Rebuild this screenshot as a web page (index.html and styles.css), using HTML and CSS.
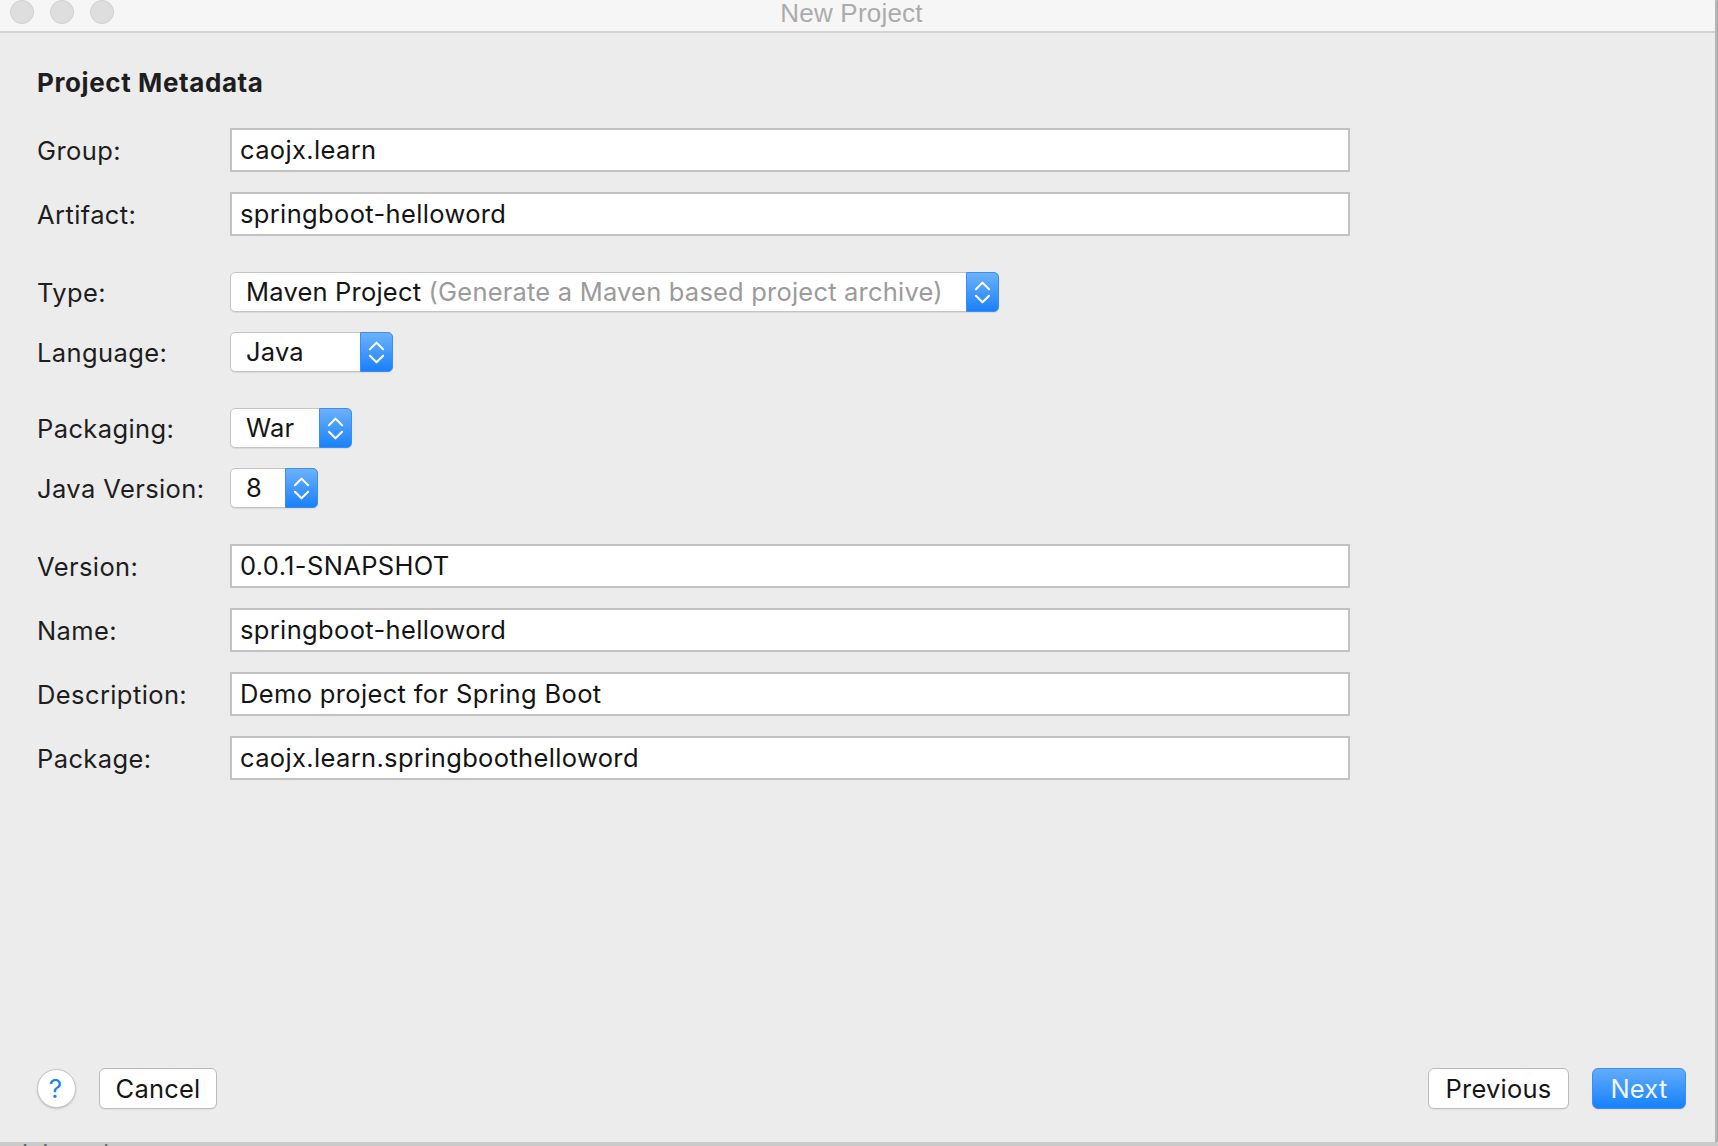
FILE: index.html
```html
<!DOCTYPE html>
<html lang="en">
<head>
<meta charset="utf-8">
<title>New Project</title>
<link rel="stylesheet" href="styles.css">
</head>
<body>
<div class="window">
  <header class="titlebar">
    <div class="lights"><span class="light"></span><span class="light"></span><span class="light"></span></div>
    <div class="title">New Project</div>
    <div></div>
  </header>
  <main class="content">
    <h1 class="heading">Project Metadata</h1>
    <div class="form">
      <div class="group">
        <div class="row"><label class="label">Group:</label><div class="field">caojx.learn</div></div>
        <div class="row"><label class="label">Artifact:</label><div class="field">springboot-helloword</div></div>
      </div>
      <div class="group">
        <div class="row"><label class="label">Type:</label>
          <div class="select w-type"><span class="select-text">Maven Project <span class="hint">(Generate a Maven based project archive)</span></span>
            <span class="stepper"><svg width="33" height="38" viewBox="0 0 33 38"><path d="M9.5 16 L16.5 9 L23.5 16 M9.5 23 L16.5 30 L23.5 23" fill="none" stroke="#fff" stroke-width="2.2" stroke-linecap="round" stroke-linejoin="round"/></svg></span>
          </div>
        </div>
        <div class="row"><label class="label">Language:</label>
          <div class="select w-lang"><span class="select-text">Java</span>
            <span class="stepper"><svg width="33" height="38" viewBox="0 0 33 38"><path d="M9.5 16 L16.5 9 L23.5 16 M9.5 23 L16.5 30 L23.5 23" fill="none" stroke="#fff" stroke-width="2.2" stroke-linecap="round" stroke-linejoin="round"/></svg></span>
          </div>
        </div>
      </div>
      <div class="group">
        <div class="row"><label class="label">Packaging:</label>
          <div class="select w-pack"><span class="select-text">War</span>
            <span class="stepper"><svg width="33" height="38" viewBox="0 0 33 38"><path d="M9.5 16 L16.5 9 L23.5 16 M9.5 23 L16.5 30 L23.5 23" fill="none" stroke="#fff" stroke-width="2.2" stroke-linecap="round" stroke-linejoin="round"/></svg></span>
          </div>
        </div>
        <div class="row"><label class="label">Java Version:</label>
          <div class="select w-ver"><span class="select-text">8</span>
            <span class="stepper"><svg width="33" height="38" viewBox="0 0 33 38"><path d="M9.5 16 L16.5 9 L23.5 16 M9.5 23 L16.5 30 L23.5 23" fill="none" stroke="#fff" stroke-width="2.2" stroke-linecap="round" stroke-linejoin="round"/></svg></span>
          </div>
        </div>
      </div>
      <div class="group">
        <div class="row"><label class="label">Version:</label><div class="field">0.0.1-SNAPSHOT</div></div>
        <div class="row"><label class="label">Name:</label><div class="field">springboot-helloword</div></div>
        <div class="row"><label class="label">Description:</label><div class="field">Demo project for Spring Boot</div></div>
        <div class="row"><label class="label">Package:</label><div class="field">caojx.learn.springboothelloword</div></div>
      </div>
    </div>
    <footer class="footer">
      <div class="footer-left">
        <button class="help">?</button>
        <button class="btn btn-cancel">Cancel</button>
      </div>
      <div class="footer-right">
        <button class="btn btn-prev">Previous</button>
        <button class="btn btn-primary btn-next">Next</button>
      </div>
    </footer>
  </main>
</div>
<div class="desk"><span class="desk-text">codelearn/notes</span></div>
</body>
</html>
```

FILE: styles.css
```css
* { box-sizing: border-box; }

html, body {
  margin: 0;
  padding: 0;
}

body {
  width: 1718px;
  height: 1146px;
  overflow: hidden;
  background: #c6c6c6;
  font-family: Inter, "Liberation Sans", Arial, sans-serif;
  color: #1c1c1c;
}

.window {
  width: 1717px;
  height: 1142px;
  background: #ececec;
  border-right: 2px solid #b6b6b6;
  display: flex;
  flex-direction: column;
  box-shadow: 0 1px 2px rgba(0, 0, 0, 0.45);
}

/* ---------- title bar ---------- */
.titlebar {
  height: 33px;
  flex: none;
  background: #f6f6f6;
  border-bottom: 2px solid #d3d3d3;
  display: grid;
  grid-template-columns: 1fr auto 1fr;
  align-items: start;
}

.lights {
  display: flex;
  gap: 16px;
  padding-left: 10px;
}

.light {
  width: 24px;
  height: 24px;
  border-radius: 50%;
  background: #dedede;
  border: 1px solid #d0d0d0;
}

.title {
  font-family: "Liberation Sans", Arial, sans-serif;
  font-size: 26px;
  line-height: 26px;
  color: #ababab;
  letter-spacing: 0.2px;
  margin-left: -12px;
}

/* ---------- content ---------- */
.content {
  flex: 1;
  display: flex;
  flex-direction: column;
  padding: 0 29px 33px 37px;
}

.heading {
  margin: 35px 0 0 0;
  font-size: 26px;
  line-height: 30px;
  font-weight: 700;
  color: #1e1e1e;
  letter-spacing: 0.6px;
}

.form {
  margin-top: 30px;
  display: flex;
  flex-direction: column;
  gap: 36px;
}

.group {
  display: flex;
  flex-direction: column;
  gap: 20px;
}

.row {
  display: grid;
  grid-template-columns: 193px auto;
  align-items: center;
}

.label {
  font-size: 25.5px;
  letter-spacing: 0.4px;
  color: #1e1e1e;
}

.field {
  width: 1120px;
  height: 44px;
  background: #fff;
  border: 2px solid #c2c2c2;
  padding-left: 8px;
  font-size: 25.5px;
  line-height: 40px;
  letter-spacing: 0.35px;
  color: #141414;
}

/* ---------- popup selects ---------- */
.select {
  height: 40px;
  display: flex;
  background: #fff;
  border: 1px solid #c5c5c5;
  border-radius: 5px;
  box-shadow: 0 1px 1px rgba(0, 0, 0, 0.08);
}

.w-type { width: 769px; }
.w-lang { width: 163px; }
.w-pack { width: 122px; }
.w-ver  { width: 88px; }

.select-text {
  flex: 1;
  padding-left: 15px;
  font-size: 25.5px;
  line-height: 38px;
  letter-spacing: 0.2px;
  color: #151515;
  white-space: nowrap;
}

.hint {
  color: #9b9b9b;
}

.stepper {
  width: 33px;
  flex: none;
  margin: -1px -1px -1px 0;
  height: 40px;
  border-radius: 0 5px 5px 0;
  background: linear-gradient(#6cb2fb, #1a80fb);
  border: 1px solid #3a8ef2;
  display: flex;
  align-items: center;
  justify-content: center;
}

.stepper svg {
  display: block;
}

/* ---------- footer ---------- */
.footer {
  margin-top: auto;
  display: flex;
  justify-content: space-between;
  align-items: center;
}

.footer-left,
.footer-right {
  display: flex;
  align-items: center;
}

.footer-left { gap: 23px; }
.footer-right { gap: 23px; }

.help {
  width: 39px;
  height: 39px;
  border-radius: 50%;
  background: #fff;
  border: 1px solid #c4c4c4;
  box-shadow: 0 1px 2px rgba(0, 0, 0, 0.18);
  font-family: Inter, "Liberation Sans", Arial, sans-serif;
  font-size: 26px;
  line-height: 37px;
  color: #1d7ff6;
  padding: 0 2px 0 0;
  text-align: center;
}

.btn {
  height: 41px;
  background: #fff;
  border: 1px solid #bcbcbc;
  border-radius: 6px;
  box-shadow: 0 1px 1px rgba(0, 0, 0, 0.06);
  font-family: Inter, "Liberation Sans", Arial, sans-serif;
  font-size: 25.5px;
  line-height: 39px;
  letter-spacing: 0.2px;
  color: #161616;
  padding: 0;
  text-align: center;
}

.btn-cancel { width: 118px; }
.btn-prev { width: 141px; }
.btn-next { width: 94px; }

.btn-primary {
  background: linear-gradient(#62acfb, #1681fb);
  border-color: #3b8ef4;
  color: #f2f6ff;
}

/* ---------- background app strip ---------- */
.desk {
  height: 4px;
  overflow: hidden;
  background: #cacaca;
}

.desk-text {
  display: block;
  margin-top: -1px;
  margin-left: -14px;
  font-family: "Liberation Sans", Arial, sans-serif;
  font-size: 26px;
  line-height: 26px;
  color: #666;
}
```
